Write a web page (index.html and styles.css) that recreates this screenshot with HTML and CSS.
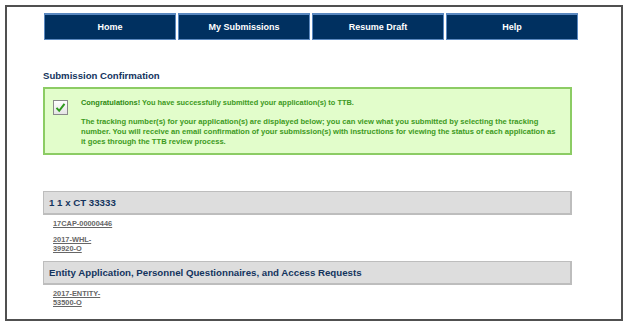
FILE: index.html
```html
<!DOCTYPE html>
<html>
<head>
<meta charset="utf-8">
<link rel="stylesheet" href="styles.css">
</head>
<body>
<div class="frame">
  <nav class="nav">
    <a class="nav-btn">Home</a>
    <a class="nav-btn">My Submissions</a>
    <a class="nav-btn">Resume Draft</a>
    <a class="nav-btn">Help</a>
  </nav>
  <div class="content">
    <h2 class="title">Submission Confirmation</h2>
    <div class="success">
      <div class="check">
        <svg width="15" height="15" viewBox="0 0 15 15">
          <defs>
            <linearGradient id="g" x1="0" y1="0" x2="0" y2="1">
              <stop offset="0" stop-color="#ffffff"/>
              <stop offset="1" stop-color="#e4e4e4"/>
            </linearGradient>
          </defs>
          <rect x="0.5" y="0.5" width="14" height="14" fill="url(#g)" stroke="#8a8a8a"/>
          <path d="M3.5 7.8 L6.2 10.8 L11.5 3.8" fill="none" stroke="#2f9a1e" stroke-width="2"/>
        </svg>
      </div>
      <div class="msg">
        <p class="msg-line"><b class="congrats">Congratulations!</b> You have successfully submitted your application(s) to TTB.</p>
        <p class="msg-line msg-detail">The tracking number(s) for your application(s) are displayed below; you can view what you submitted by selecting the tracking number. You will receive an email confirmation of your submission(s) with instructions for viewing the status of each application as it goes through the TTB review process.</p>
      </div>
    </div>

    <div class="group">
      <div class="group-head">1 1 x CT 33333</div>
      <ul class="links">
        <li><a class="link">17CAP-00000446</a></li>
        <li><a class="link">2017-WHL-39920-O</a></li>
      </ul>
    </div>
    <div class="group">
      <div class="group-head">Entity Application, Personnel Questionnaires, and Access Requests</div>
      <ul class="links">
        <li><a class="link">2017-ENTITY-53500-O</a></li>
      </ul>
    </div>
  </div>
</div>
</body>
</html>
```

FILE: styles.css
```css
html, body {
  margin: 0;
  padding: 0;
  background: #ffffff;
}
body {
  font-family: "Liberation Sans", Arial, sans-serif;
}
.frame {
  margin: 5px 5px 0 5px;
  width: 614px;
  height: 312px;
  border: 2px solid #505050;
  overflow: hidden;
}
.nav {
  display: flex;
  gap: 2px;
  margin: 6px 0 0 37px;
}
.nav-btn {
  box-sizing: border-box;
  width: 132px;
  height: 27px;
  background: #003060;
  border: 1px solid #5a88c0;
  border-top: 2px solid #5a88c0;
  color: #ffffff;
  font-weight: bold;
  font-size: 9px;
  display: flex;
  align-items: center;
  justify-content: center;
}
.content {
  margin-left: 36px;
  width: 529px;
}
.title {
  margin: 29px 0 0 0;
  font-size: 9.6px;
  line-height: 14px;
  color: #14345e;
  font-weight: bold;
}
.success {
  box-sizing: border-box;
  margin-top: 4px;
  height: 68px;
  background: #e2fdcb;
  border: 2px solid #8ccc64;
  display: flex;
  padding: 9px 11px 0 8px;
  gap: 13px;
}
.check {
  flex: none;
  width: 15px;
  height: 15px;
  margin-top: 2px;
}
.msg {
  color: #3d9a22;
  font-size: 7.4px;
  line-height: 10px;
  font-weight: bold;
}
.msg-line {
  margin: 0 0 9px 0;
}
.msg-detail {
  font-size: 7.6px;
}
.congrats {
  color: #2e8a12;
}
.success + .group {
  margin-top: 36px;
}
.group-head {
  box-sizing: border-box;
  height: 24px;
  background: #dddddd;
  border: 1px solid #bdbdbd;
  border-right-width: 2px;
  border-bottom-width: 2px;
  padding: 0 0 0 5px;
  display: flex;
  align-items: center;
  font-size: 9.7px;
  font-weight: bold;
  color: #14345e;
}
.links {
  list-style: none;
  margin: 0;
  padding: 4px 0 1px 10px;
  width: 60px;
}
.links li {
  margin-bottom: 7px;
}
.link {
  color: #666666;
  font-size: 7.4px;
  line-height: 9px;
  font-weight: bold;
  text-decoration: underline;
  display: block;
}
```
